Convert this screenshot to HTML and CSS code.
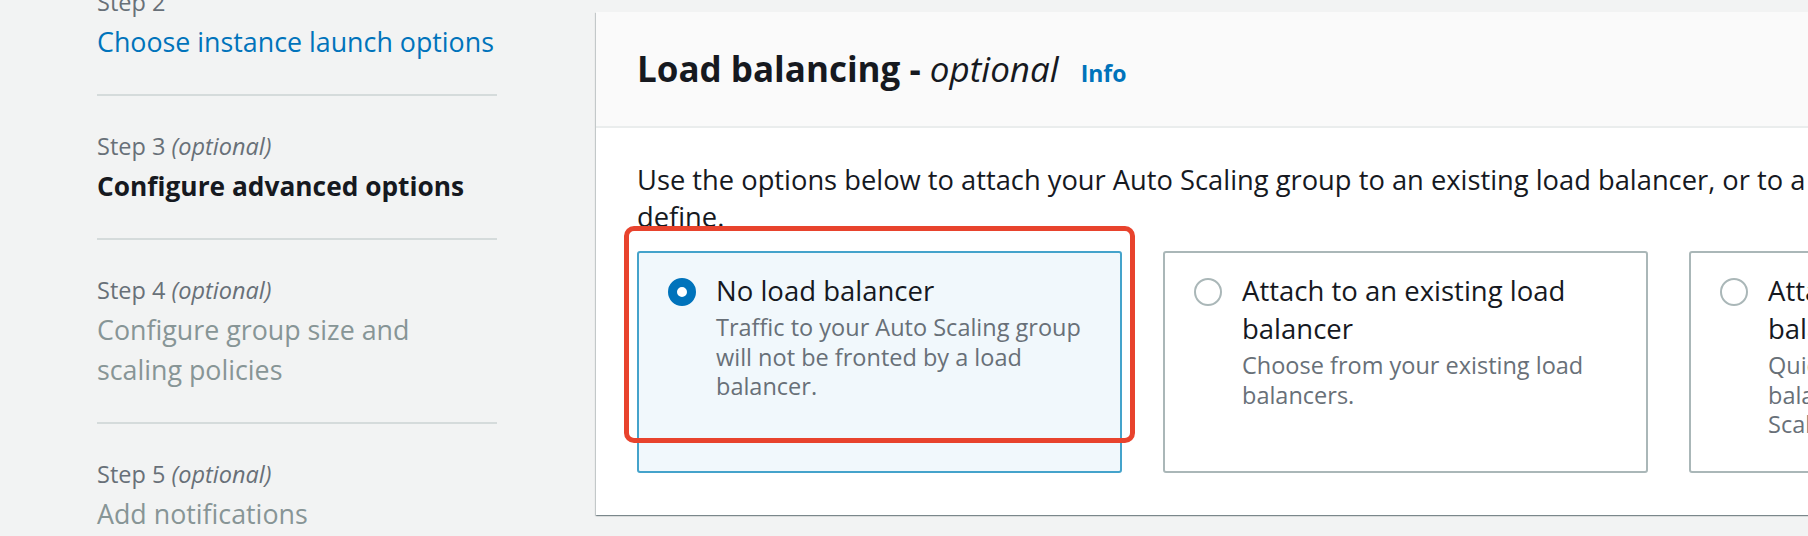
FILE: index.html
```html
<!DOCTYPE html>
<html lang="en">
<head>
<meta charset="utf-8">
<title>Load balancing</title>
<link rel="stylesheet" href="styles.css">
</head>
<body>
<div class="page">
  <nav class="steps">
    <ol class="step-list">
      <li class="step">
        <div class="step-label">Step 2</div>
        <a class="step-title link" href="#">Choose instance launch options</a>
      </li>
      <li class="step">
        <div class="step-label">Step 3 <i>(optional)</i></div>
        <span class="step-title current">Configure advanced options</span>
      </li>
      <li class="step">
        <div class="step-label">Step 4 <i>(optional)</i></div>
        <span class="step-title">Configure group size and scaling policies</span>
      </li>
      <li class="step">
        <div class="step-label">Step 5 <i>(optional)</i></div>
        <span class="step-title">Add notifications</span>
      </li>
    </ol>
  </nav>

  <main class="panel">
    <div class="panel-header">
      <h2 class="panel-title">Load balancing - <i>optional</i></h2>
      <a class="info" href="#">Info</a>
    </div>
    <div class="panel-body">
      <p class="intro">Use the options below to attach your Auto Scaling group to an existing load balancer, or to a new load balancer that you define.</p>
      <div class="tiles">
        <label class="tile selected">
          <span class="radio"></span>
          <span class="tile-text">
            <span class="tile-title">No load balancer</span>
            <span class="tile-desc">Traffic to your Auto Scaling group will not be fronted by a load balancer.</span>
          </span>
        </label>
        <label class="tile">
          <span class="radio"></span>
          <span class="tile-text">
            <span class="tile-title">Attach to an existing load balancer</span>
            <span class="tile-desc">Choose from your existing load balancers.</span>
          </span>
        </label>
        <label class="tile">
          <span class="radio"></span>
          <span class="tile-text">
            <span class="tile-title">Attach to a new load balancer</span>
            <span class="tile-desc">Quickly create a basic load balancer to attach to your Auto Scaling group.</span>
          </span>
        </label>
        <div class="highlight"></div>
      </div>
    </div>
  </main>
</div>
</body>
</html>
```

FILE: styles.css
```css
html, body {
  margin: 0;
  height: 100%;
  overflow: hidden;
  background: #f2f3f3;
  font-family: "Open Sans", "Noto Sans", sans-serif;
  color: #16191f;
}

.page {
  display: flex;
  align-items: flex-start;
  gap: 99px;
  padding-left: 97px;
  width: max-content;
}

/* ---------- Steps sidebar ---------- */
.steps {
  flex: none;
  width: 400px;
}

.step-list {
  list-style: none;
  margin: -48px 0 0;
  padding: 0;
}

.step {
  padding: 30px 0 32px;
  border-bottom: 2px solid #d5dbdb;
}

.step-label {
  font-size: 23.5px;
  line-height: 40px;
  color: #687078;
}

.step-title {
  display: block;
  font-size: 26.8px;
  line-height: 40px;
  color: #879596;
}

.step-title.link {
  color: #0073bb;
  text-decoration: none;
}

.step-title.current {
  color: #16191f;
  font-weight: 700;
  font-size: 26.3px;
}

/* ---------- Panel ---------- */
.panel {
  flex: none;
  width: 1621px;
  margin-top: 12px;
  background: #fff;
  box-shadow: 0 1px 1px 0 rgba(0, 28, 36, 0.3),
              1px 1px 1px 0 rgba(0, 28, 36, 0.15),
              -1px 1px 1px 0 rgba(0, 28, 36, 0.15);
}

.panel-header {
  display: flex;
  align-items: baseline;
  gap: 22px;
  padding: 35px 41px;
  background: #fafafa;
  border-bottom: 2px solid #eaeded;
}

.panel-title {
  margin: 0;
  font-size: 35px;
  line-height: 44px;
  font-weight: 700;
}

.panel-title i {
  font-weight: 400;
}

.info {
  font-size: 23px;
  font-weight: 700;
  color: #0073bb;
  text-decoration: none;
}

.panel-body {
  padding: 33px 41px 42px;
}

.intro {
  margin: 0 0 16px;
  font-size: 27.3px;
  line-height: 37px;
}

/* ---------- Tiles ---------- */
.tiles {
  position: relative;
  display: grid;
  grid-template-columns: repeat(3, 485px);
  gap: 41px;
}

.tile {
  display: flex;
  align-items: flex-start;
  gap: 20px;
  padding: 19px 32px 31px 29px;
  border: 2px solid #aab7b8;
  border-radius: 3px;
  background: #fff;
}

.tile.selected {
  border-color: #44a3cb;
  background: #f1f8fc;
}

.radio {
  flex: none;
  box-sizing: border-box;
  width: 28px;
  height: 28px;
  margin-top: 6px;
  border: 2px solid #aab7b8;
  border-radius: 50%;
  background: #fff;
}

.tile.selected .radio {
  border: 9px solid #0073bb;
}

.tile-text {
  display: flex;
  flex-direction: column;
}

.tile-title {
  font-size: 27.5px;
  line-height: 38px;
  color: #16191f;
}

.tile-desc {
  margin-top: 3px;
  font-size: 23.5px;
  line-height: 29.5px;
  color: #687078;
}

/* annotation overlay */
.highlight {
  position: absolute;
  left: -13px;
  top: -25px;
  width: 511px;
  height: 217px;
  box-sizing: border-box;
  border: 5px solid #e8432d;
  border-radius: 10px;
  pointer-events: none;
}
```
